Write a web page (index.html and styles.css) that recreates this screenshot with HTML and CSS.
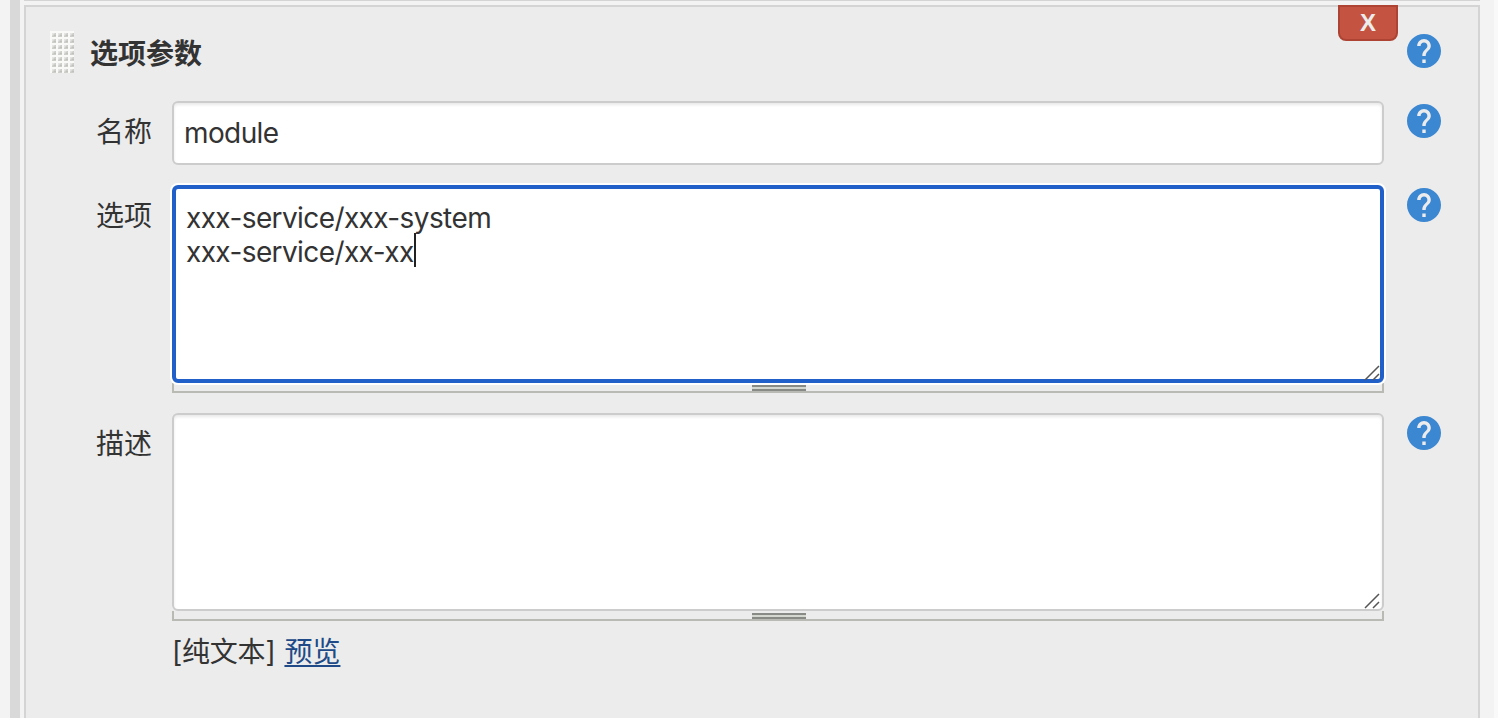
FILE: index.html
```html
<!DOCTYPE html>
<html lang="zh-CN">
  <head>
    <meta charset="UTF-8" />
    <meta name="viewport" content="width=device-width, initial-scale=1.0" />
    <title>选项参数</title>
    <link rel="stylesheet" href="styles.css">
  </head>
  <body>
    <svg width="0" height="0" class="symbols">
      <symbol id="help" viewBox="2 2 20 20">
        <path d="M12 2C6.48 2 2 6.48 2 12s4.48 10 10 10 10-4.48 10-10S17.52 2 12 2zm1 17h-2v-2h2v2zm2.07-7.75l-.9.92C13.45 12.9 13 13.5 13 15h-2v-.5c0-1.1.45-2.1 1.17-2.83l1.24-1.26c.37-.36.59-.86.59-1.41 0-1.1-.9-2-2-2s-2 .9-2 2H8c0-2.21 1.79-4 4-4s4 1.79 4 4c0 .88-.36 1.68-.93 2.25z" />
      </symbol>
      <symbol id="corner" viewBox="0 0 16 16">
        <path d="M1 15L15 1M9 15L15 9" />
      </symbol>
      <pattern id="dots" width="6" height="6" patternUnits="userSpaceOnUse">
        <rect width="6" height="6" fill="#f9f9f7" />
        <rect x="2" y="2" width="4" height="4" fill="#e4e4e2" />
        <path d="M2 6V5L5 2H6V6Z" fill="#cdcdca" />
        <rect x="4" y="4" width="2" height="1" fill="#c0c0bd" />
      </pattern>
    </svg>

    <div class="side-bar"></div>
    <main class="content">
      <div class="previous"></div>
      <section class="chunk">
        <header class="chunk-header">
          <svg class="grip" width="24" height="42"><rect width="24" height="42" fill="url(#dots)" /></svg>
          <b class="title">选项参数</b>
          <button class="delete">X</button>
          <svg class="help"><use href="#help" /></svg>
        </header>

        <div class="row">
          <label class="name">名称</label>
          <div class="field input">module</div>
          <svg class="help"><use href="#help" /></svg>
        </div>

        <div class="row">
          <label class="name">选项</label>
          <div class="setting">
            <div class="field textarea focused">xxx-service/xxx-system<br>xxx-service/xx-xx<span class="caret"></span><svg class="corner"><use href="#corner" /></svg></div>
            <div class="handle"><span class="handle-grip"></span></div>
          </div>
          <svg class="help"><use href="#help" /></svg>
        </div>

        <div class="row">
          <label class="name">描述</label>
          <div class="setting">
            <div class="field textarea"><svg class="corner"><use href="#corner" /></svg></div>
            <div class="handle"><span class="handle-grip"></span></div>
            <div class="preview"><span>[纯文本]</span><a href="#">预览</a></div>
          </div>
          <svg class="help"><use href="#help" /></svg>
        </div>
      </section>
    </main>
    <div class="page-edge"></div>
  </body>
</html>
```
FILE: styles.css
```css
* {
  box-sizing: border-box;
}

body {
  display: flex;
  height: 100vh;
  margin: 0;
  padding-left: 10px;
  overflow: hidden;
  background-color: #f3f3f3;
  color: #333;
  font-family: Inter, "Noto Sans CJK SC", sans-serif;
  font-size: 28px;
  line-height: 34px;
}

.symbols {
  position: absolute;
}

.side-bar {
  width: 10px;
  background-color: #d9d9d9;
}

.content {
  display: flex;
  flex-direction: column;
  width: 1456px;
  margin-left: 4px;
}

.previous {
  height: 1px;
  margin-bottom: 4px;
  background-color: #d4d4d4;
}

.chunk {
  flex: 1;
  border: 2px solid #d4d4d4;
  border-bottom: none;
  background-color: #ececec;
}

.page-edge {
  width: 4px;
  margin-left: auto;
  background-color: #f9f9f9;
}

.chunk-header {
  display: flex;
  align-items: flex-start;
  height: 94px;
  padding-left: 24px;
}

.grip {
  margin-top: 24px;
}

.title {
  margin: 30px 0 0 16px;
}

.delete {
  width: 60px;
  height: 36px;
  margin: -2px 0 0 auto;
  padding: 0;
  border: 2px solid #ad4433;
  border-radius: 0 0 8px 8px;
  background-color: #c45441;
  color: #ececec;
  font: bold 24px/32px "Liberation Sans", sans-serif;
}

.help {
  flex: none;
  width: 34px;
  height: 34px;
  margin: 3px 0 0 23px;
  fill: #3b87d1;
}

.chunk-header .help {
  margin: 27px 37px 0 9px;
}

.row {
  display: flex;
  align-items: flex-start;
  margin-bottom: 20px;
}

.name {
  width: 146px;
  padding: 14px 20px 0 0;
  text-align: right;
}

.field {
  width: 1212px;
  border: 2px solid #ccc;
  border-radius: 6px;
  background-color: #fff;
  box-shadow: inset 0 2px 3px #e9e9e9;
  letter-spacing: -0.6px;
}

.input {
  height: 64px;
  padding: 13px 10px;
}

.textarea {
  position: relative;
  height: 198px;
  padding: 12px 10px;
}

.focused {
  border: 4px solid #2160c8;
  box-shadow: 0 0 0 2px #fff;
}

.caret {
  display: inline-block;
  width: 2px;
  height: 34px;
  margin-top: -2px;
  vertical-align: top;
  background-color: #222;
}

.corner {
  position: absolute;
  right: 2px;
  bottom: 0;
  width: 16px;
  height: 16px;
  fill: none;
  stroke: #555;
  stroke-width: 1.5;
}

.focused .corner {
  right: 0;
  bottom: -2px;
}

.handle {
  display: flex;
  height: 10px;
  padding: 2px 0 0 578px;
  border: 2px solid #b9bab3;
  border-top: none;
}

.handle-grip {
  width: 54px;
  height: 6px;
  border: 2px solid #888a85;
  border-width: 2px 0;
  background-color: #d3d7cf;
}

.preview {
  display: flex;
  gap: 9px;
  margin-top: 14px;
  letter-spacing: -0.2px;
}

.preview a {
  color: #204a87;
  letter-spacing: 0;
  text-decoration-thickness: 2px;
  text-underline-offset: 3px;
}
```
